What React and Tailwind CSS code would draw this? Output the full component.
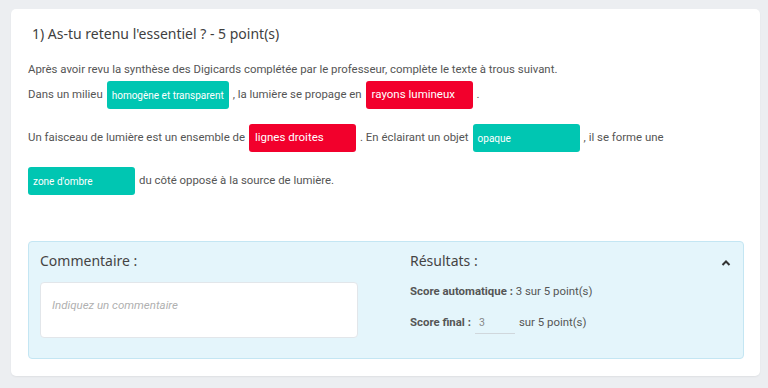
import React from "react";

const Teal = ({ children }) => (
  <span className="inline-flex items-center h-[28px] min-w-[107px] px-[5px] rounded-[3px] bg-[#00c6b2] text-white text-[10px]">
    {children}
  </span>
);
const Red = ({ children }) => (
  <span className="inline-flex items-center h-[28px] min-w-[107px] px-[6px] rounded-[3px] bg-[#f2002c] text-white text-[11.5px]">
    {children}
  </span>
);

export default function App() {
  const title = { fontFamily: "'Noto Sans', 'Open Sans', sans-serif" };
  const body = { fontFamily: "Roboto, 'Noto Sans', sans-serif" };
  return (
    <div className="w-[768px] h-[388px] bg-[#eceef1] pt-[9px] pl-[11px] pr-[8px]" style={body}>
      <div className="bg-white rounded-[5px] h-[367px] pt-[15px] pl-[17px] pr-[16px] shadow-[0_1px_2px_rgba(0,0,0,0.06)]">
        <div className="pl-[4px] text-[14px] leading-[20px] text-[#3f3f3f]" style={title}>
          1) As-tu retenu l'essentiel ? - 5 point(s)
        </div>
        <div className="mt-[16px] text-[11.4px] leading-[18px] text-[#555]">
          Après avoir revu la synthèse des Digicards complétée par le professeur, complète le texte à trous suivant.
        </div>
        <div className="mt-[3px] flex items-center gap-[4px] text-[11.4px] text-[#555]">
          <span>Dans un milieu</span>
          <Teal>homogène et transparent</Teal>
          <span>, la lumière se propage en</span>
          <Red>rayons lumineux</Red>
          <span>.</span>
        </div>
        <div className="mt-[15px] flex items-center gap-[4px] text-[11.4px] text-[#555]">
          <span>Un faisceau de lumière est un ensemble de</span>
          <Red>lignes droites</Red>
          <span>. En éclairant un objet</span>
          <Teal>opaque</Teal>
          <span>, il se forme une</span>
        </div>
        <div className="mt-[15px] flex items-center gap-[4px] text-[11.4px] text-[#555]">
          <Teal>zone d'ombre</Teal>
          <span>du côté opposé à la source de lumière.</span>
        </div>

        <div className="mt-[46px] bg-[#e4f5fb] border border-[#c4e6f3] rounded-[4px] h-[118px] flex pl-[11px] pr-[12px] pt-[9px]">
          <div className="w-[318px]">
            <div className="text-[14px] leading-[20px] text-[#444]" style={title}>Commentaire :</div>
            <div className="mt-[11px] h-[56px] bg-white border border-[#e2e6ea] rounded-[4px] px-[11px] pt-[9px]">
              <span className="italic text-[11.5px] text-[#b0b0b0]">Indiquez un commentaire</span>
            </div>
          </div>
          <div className="ml-[52px] flex-1">
            <div className="flex items-center justify-between">
              <div className="text-[14px] leading-[20px] text-[#444]" style={title}>Résultats :</div>
              <svg width="10" height="8" viewBox="0 0 10 8" className="mt-[3px]">
                <path d="M1.5 6 L5 2.5 L8.5 6" fill="none" stroke="#333" strokeWidth="2" />
              </svg>
            </div>
            <div className="mt-[11px] text-[11.4px] leading-[18px] text-[#555]">
              <span className="font-bold">Score automatique :</span> 3 sur 5 point(s)
            </div>
            <div className="mt-[12px] flex items-center text-[11.4px] text-[#555]">
              <span className="font-bold">Score final :</span>
              <span className="ml-[4px] w-[40px] h-[22px] border-b border-[#d0d7dc] pl-[4px] flex items-center text-[10.5px] text-[#888]">3</span>
              <span className="ml-[4px]">sur 5 point(s)</span>
            </div>
          </div>
        </div>
      </div>
    </div>
  );
}
